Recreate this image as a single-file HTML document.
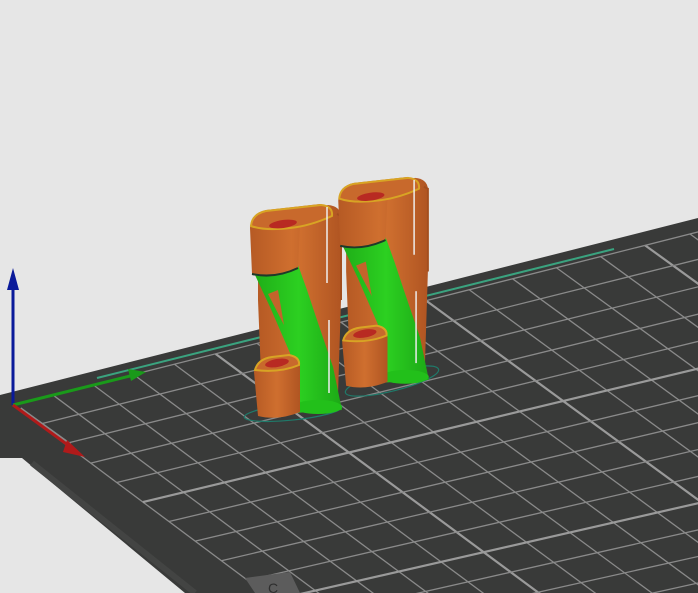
<!DOCTYPE html>
<html><head><meta charset="utf-8"><style>
html,body{margin:0;padding:0;background:#e6e6e6;overflow:hidden;}
svg{display:block;}
</style></head><body>
<svg id="s" width="698" height="593" viewBox="0 0 698 593" xmlns="http://www.w3.org/2000/svg">
<defs>
<linearGradient id="og" x1="0" x2="1" y1="0" y2="0">
<stop offset="0" stop-color="#b65a24"/><stop offset="0.5" stop-color="#cf6f2f"/><stop offset="1" stop-color="#b05522"/>
</linearGradient>
<linearGradient id="gg" x1="0" x2="1" y1="0" y2="0">
<stop offset="0" stop-color="#1fae18"/><stop offset="0.5" stop-color="#2cd021"/><stop offset="1" stop-color="#1ca816"/>
</linearGradient>
<clipPath id="bedclip"><polygon points="0,395 698,218 698,593 185,593 22,458 0,458"/></clipPath>
</defs>
<rect width="698" height="593" fill="#e6e6e6"/>
<polygon points="0,395 698,218 698,593 185,593 22,458 0,458" fill="#393a39"/>
<line x1="32" y1="463" x2="195" y2="593" stroke="#434443" stroke-width="6"/>
<g id="grid" clip-path="url(#bedclip)"></g>
<polygon points="245,578 290,572 300,593 255,593" fill="#5c5c5c"/>
<text x="268" y="593" font-family="Liberation Sans, sans-serif" font-size="14" fill="#2e2e2e">C</text>
<line x1="97" y1="378" x2="614" y2="249" stroke="#3aa37f" stroke-width="2"/>
<line x1="20" y1="409" x2="70" y2="445" stroke="#8a8a8a" stroke-width="4"/>
<line x1="13" y1="405" x2="13" y2="288" stroke="#0a1a9a" stroke-width="3"/>
<polygon points="7,290 19,290 13,268" fill="#0a1a9a"/>
<line x1="13" y1="405" x2="130" y2="376" stroke="#1a9a1a" stroke-width="3"/>
<polygon points="128,369 146,372 131,381" fill="#1a9a1a"/>
<line x1="13" y1="405" x2="72" y2="448" stroke="#b01a1a" stroke-width="3"/>
<polygon points="67,440 85,457 63,452" fill="#b01a1a"/>
<ellipse cx="293" cy="412" rx="49" ry="8" fill="none" stroke="#1f7a6a" stroke-width="1.2" transform="rotate(-6 293 412)"/>
<ellipse cx="392" cy="381" rx="48" ry="10" fill="none" stroke="#1f7a6a" stroke-width="1.2" transform="rotate(-14 392 381)"/>
<g id="obj">
<path d="M258,222 L328,205 Q340,206 341,216 L341,300 L338,395 L300,405 L262,400 L258,300 Z" fill="url(#og)"/>
<path d="M255,275 L298,265 L307,290 L317,320 L333,367 L342,410 L293,413 L295,380 L290,353 L270,307 Z" fill="url(#gg)"/>
<path d="M268,294 L278,290 L284,325 Z" fill="#c4642b"/>
<ellipse cx="318" cy="407" rx="24" ry="7" fill="#22c01a"/>
<path d="M250,228 Q251,213 266,210 L320,204 Q333,206 333,217 L300,226 L298,268 Q275,278 252,274 Z" fill="url(#og)"/>
<path d="M251,226 Q252,214 266,211 L321,205 Q333,206 332,216 Q310,226 290,228 Q265,231 251,226 Z" fill="#c8692c" stroke="#d8a424" stroke-width="2"/>
<ellipse cx="283" cy="224" rx="14" ry="4" fill="#b82a22" transform="rotate(-8 283 224)"/>
<path d="M252,274 Q275,279 298,268" fill="none" stroke="#1e3a2a" stroke-width="2"/>
<path d="M254,372 Q256,360 270,357 L288,355 Q300,357 300,366 L300,412 Q278,421 258,416 Z" fill="url(#og)"/>
<path d="M255,370 Q258,359 272,357 L289,355 Q300,357 299,365 Q280,373 255,370 Z" fill="#c8692c" stroke="#d8a424" stroke-width="2"/>
<ellipse cx="277" cy="363" rx="12" ry="4" fill="#b82a22" transform="rotate(-10 277 363)"/>
<line x1="327" y1="207" x2="327" y2="283" stroke="#eeeeee" stroke-width="1.5"/>
<line x1="329" y1="320" x2="329" y2="393" stroke="#eeeeee" stroke-width="1.5"/>
<path d="M337,214 L341,216 L341,300" fill="none" stroke="#a34e1e" stroke-width="2"/>
</g>
<use href="#obj" transform="translate(92,-24) scale(0.985)"/>
</svg>
<script>
(function(){
var src=[[0,0],[0,16],[10,0],[10,16]];
var dst=[[13,405],[690,234],[274,600],[975,440]];
var A=[],b=[];
for(var i=0;i<4;i++){var x=src[i][0],y=src[i][1],X=dst[i][0],Y=dst[i][1];
A.push([x,y,1,0,0,0,-X*x,-X*y]);b.push(X);
A.push([0,0,0,x,y,1,-Y*x,-Y*y]);b.push(Y);}
var n=8;for(var c=0;c<n;c++){var p=c;for(var r=c+1;r<n;r++)if(Math.abs(A[r][c])>Math.abs(A[p][c]))p=r;
var t=A[c];A[c]=A[p];A[p]=t;t=b[c];b[c]=b[p];b[p]=t;
for(var r=0;r<n;r++){if(r==c)continue;var f=A[r][c]/A[c][c];for(var k=c;k<n;k++)A[r][k]-=f*A[c][k];b[r]-=f*b[c];}}
var h=[];for(var i=0;i<n;i++)h.push(b[i]/A[i][i]);
function P(u,v){var w=h[6]*u+h[7]*v+1;return [(h[0]*u+h[1]*v+h[2])/w,(h[3]*u+h[4]*v+h[5])/w];}
var g=document.getElementById('grid'),ns='http://www.w3.org/2000/svg';
function L(a,c,th){var l=document.createElementNS(ns,'line');l.setAttribute('x1',a[0]);l.setAttribute('y1',a[1]);l.setAttribute('x2',c[0]);l.setAttribute('y2',c[1]);
l.setAttribute('stroke',th?'#9a9a9a':'#8a8a8a');l.setAttribute('stroke-width',th?2.2:1.3);g.appendChild(l);}
for(var v=0;v<=16;v++)L(P(0,v),P(30,v),v%5==0&&v>0);
for(var u=0;u<=30;u++)L(P(u,0),P(u,16.6),u%5==0&&u>0);
})();
</script>
</body></html>
